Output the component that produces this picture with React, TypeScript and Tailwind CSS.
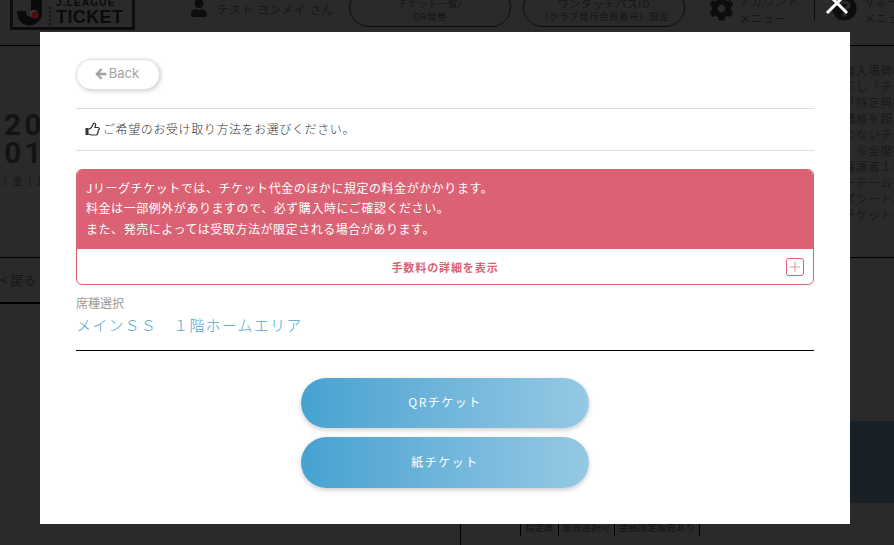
import React from 'react';
import { FaArrowLeft, FaCog, FaQuestionCircle, FaUser } from 'react-icons/fa';

const sans = "font-['Noto_Sans_CJK_JP','Noto_Sans',sans-serif]";

const noticeLines = [
  'Jリーグチケットでは、チケット代金のほかに規定の料金がかかります。',
  '料金は一部例外がありますので、必ず購入時にご確認ください。',
  'また、発売によっては受取方法が限定される場合があります。',
];

const sideLines = [
  'は入場資格',
  '忘し「チケ',
  '「特定興行',
  '価格を超え',
  'のないチケ',
  '　※全席指',
  '保護者１名',
  'ーチームを',
  'ズシート、',
  'チケットを',
];

const tags = ['指定席', '座席選択可', '会員限定販売あり'];

const JLogo = () => (
  <svg width="26" height="27" viewBox="0 0 26 27" className="shrink-0">
    <path d="M14 0h11v14a12.5 12.5 0 0 1-25 0v-2h9v2a4 4 0 0 0 5 3.500z" fill="#0b0b0b" />
    <circle cx="17" cy="15" r="4" fill="#3a3a3a" />
    <circle cx="18" cy="16" r="3.500" fill="#4e0d10" />
  </svg>
);

const ThumbIcon = () => (
  <svg width="15" height="14" viewBox="0 0 15 14" className="shrink-0">
    <rect x="0.500" y="6" width="3" height="7" fill="#333333" />
    <path
      d="M3.500 7.500 6.500 5.500 8.500 1.500C10 .8 11 2 10.500 3.500L10 5.500H13C14.500 5.500 14.800 7.500 13.500 8L12.500 12C12.300 12.800 11.500 13 11 13H6.500L3.500 12"
      fill="none"
      stroke="#333333"
      strokeWidth="1.200"
    />
  </svg>
);

const Background = () => (
  <div className="h-[545px] w-[894px] overflow-hidden bg-[#2a2a2a] text-[#131313]">
    {/* Header */}
    <header className="flex h-[46px] items-start whitespace-nowrap border-b border-black">
      <div className="ml-[10px] mt-[-12px] flex h-[42px] w-[125px] shrink-0 items-end border-[3px] border-[#0d0d0d] pb-[1px] pl-[4px]">
        <JLogo />
        <div className="mb-[1px] ml-[6px] flex flex-col gap-[2px]">
          {[0, 1, 2, 3, 4].map((dot) => (
            <span key={dot} className="h-[2px] w-[2px] rounded-full bg-[#0b0b0b]" />
          ))}
        </div>
        <div className="ml-[5px] font-['Liberation_Sans',sans-serif] font-bold leading-none text-[#0b0b0b]">
          <div className="text-[10px] leading-[11px] tracking-[1.2px]">J.LEAGUE</div>
          <div className="text-[18px] leading-[18px] tracking-[0.4px]">TICKET</div>
        </div>
      </div>
      <FaUser className="ml-[55px] mt-[-1px] shrink-0 text-[#0d0d0d]" size={18} />
      <span className={`${sans} ml-[9px] mt-[1px] w-[116px] shrink-0 text-[11.5px] leading-[16px] tracking-[0.8px] text-[#161616]`}>テスト ヨンメイ さん</span>
      <div className={`${sans} ml-[16px] mt-[-12px] flex h-[39px] w-[162px] shrink-0 flex-col items-center justify-end rounded-[20px] border border-[#0d0d0d] pb-[3px] text-[9.5px] leading-[13px] tracking-[0.5px] text-[#161616]`}>
        <span>チケット一覧/</span>
        <span>QR発券</span>
      </div>
      <div className={`${sans} ml-[12px] mt-[-12px] flex h-[39px] w-[162px] shrink-0 flex-col items-center justify-end rounded-[20px] border border-[#0d0d0d] pb-[3px] leading-[13px] text-[#161616]`}>
        <span className="text-[11px] tracking-[0.5px]">ワンタッチパスID</span>
        <span className="text-[9.5px] tracking-[0.5px]">（クラブ発行会員番号）設定</span>
      </div>
      <FaCog className="ml-[24px] mt-[-4px] shrink-0 text-[#0d0d0d]" size={25} />
      <div className={`${sans} ml-[5px] mt-[-7px] flex w-[60px] shrink-0 flex-col text-[11px] leading-[17px] tracking-[1px] text-[#161616]`}>
        <span>アカウント</span>
        <span>メニュー</span>
      </div>
      <div className="ml-[15px] mt-[-1px] h-[21px] w-px shrink-0 bg-[#0d0d0d]" />
      <FaQuestionCircle className="ml-[17px] mt-[-4px] shrink-0 text-[#0d0d0d]" size={25} />
      <div className={`${sans} ml-[7px] mt-[-7px] flex shrink-0 flex-col text-[11px] leading-[17px] tracking-[1px] text-[#161616]`}>
        <span>サポート</span>
        <span>メニュー</span>
      </div>
    </header>

    {/* Page body */}
    <div className="flex h-[499px]">
      <div className="flex w-[461px] shrink-0 flex-col border-r border-black">
        <div className="h-[212px] shrink-0 border-b border-black pl-[4px] pt-[65px]">
          <div className="font-['Roboto',sans-serif] text-[30px] font-bold leading-[28px] tracking-[3px] text-[#131313]">20</div>
          <div className="font-['Roboto',sans-serif] text-[30px] font-bold leading-[28px] tracking-[3px] text-[#131313]">01</div>
          <div className={`${sans} mt-[7px] whitespace-pre text-[10px] leading-[14px] tracking-[1.5px] text-[#161616]`}>[ 金 ] 1</div>
        </div>
        <div className={`${sans} flex h-[46px] shrink-0 items-center border-b-2 border-black text-[13px] text-[#171717]`}>&lt; 戻る</div>
      </div>
      <div className="flex min-w-0 flex-1 flex-col">
        <div className="flex h-[212px] shrink-0 justify-end border-b border-black">
          <div className={`${sans} w-[50px] shrink-0 overflow-hidden whitespace-nowrap pt-[16px] text-[11.5px] leading-[16px] tracking-[0.6px] text-[#191919]`}>
            {sideLines.map((line) => (
              <div key={line}>{line}</div>
            ))}
          </div>
        </div>
        <div className="mt-[163px] h-[82px] shrink-0 bg-[#192127]" />
        <div className={`${sans} ml-[59px] mt-[17px] flex h-[16px] text-[9.5px] leading-[14px] text-[#131313]`}>
          {tags.map((tag) => (
            <span key={tag} className="border-l border-black px-[4px] last:border-r">{tag}</span>
          ))}
        </div>
      </div>
    </div>
  </div>
);

const Modal = () => (
  <div className={`${sans} flex h-[492px] w-[810px] flex-col bg-white px-[36px] pt-[27px]`}>
    <button className="flex h-[31px] w-[84px] shrink-0 items-center justify-center gap-[2px] rounded-full border border-[#e2e2e2] bg-white text-[#a3a3a3] shadow-[1px_1px_4px_rgba(0,0,0,0.2)]">
      <FaArrowLeft size={12} className="mb-[1px] ml-[-2px] stroke-[30]" />
      <span className="mb-[2px] font-['Inter',sans-serif] text-[13px] leading-none">Back</span>
    </button>

    <div className="mt-[18px] flex h-[43px] shrink-0 items-center gap-[3px] border-y border-[#dddddd] pb-[2px] pl-[9px] text-[12px] font-light tracking-[0.6px] text-[#333333]">
      <ThumbIcon />
      <span>ご希望のお受け取り方法をお選びください。</span>
    </div>

    <div className="mt-[18px] shrink-0 overflow-hidden rounded-[6px] border border-[#db6274]">
      <div className="flex h-[79px] flex-col justify-center bg-[#db6274] pb-[2px] pl-[9px] text-[12px] leading-[20.5px] tracking-[0.55px] text-white">
        {noticeLines.map((line) => (
          <div key={line}>{line}</div>
        ))}
      </div>
      <div className="relative flex h-[35px] items-center justify-center pt-[2px] text-[11px] font-bold tracking-[0.9px] text-[#db6274]">
        <span>手数料の詳細を表示</span>
        <span className="absolute right-[9px] top-[9px] flex h-[18px] w-[18px] items-center justify-center rounded-[3px] border border-[#db6274]">
          <svg width="12" height="12" viewBox="0 0 12 12">
            <path d="M6 1v10M1 6h10" stroke="#e79aa6" strokeWidth="1.2" />
          </svg>
        </span>
      </div>
    </div>

    <div className="mt-[9px] shrink-0 text-[12px] leading-[18px] text-[#9a9a9a]">席種選択</div>
    <div className="mt-[2px] h-[37px] shrink-0 border-b border-black text-[15px] font-light leading-[21px] tracking-[1.2px] text-[#4fa3d3]">メインＳＳ　１階ホームエリア</div>

    <div className="mt-[27px] flex flex-col items-center gap-[9px]">
      <button className="h-[50px] w-[288px] rounded-full bg-gradient-to-r from-[#45a2d1] to-[#95c9e4] pb-[2px] text-[12px] tracking-[1.5px] text-white shadow-[0_2px_5px_rgba(0,0,0,0.2)]">
        QRチケット
      </button>
      <button className="h-[51px] w-[288px] rounded-full bg-gradient-to-r from-[#45a2d1] to-[#95c9e4] pb-[2px] text-[12px] tracking-[1.5px] text-white shadow-[0_2px_5px_rgba(0,0,0,0.2)]">
        紙チケット
      </button>
    </div>
  </div>
);

export default function App() {
  return (
    <div className="relative h-[545px] w-[894px] overflow-hidden">
      <Background />
      {/* Dialog layer */}
      <div className="absolute inset-0 pl-[40px] pt-[32px]">
        <Modal />
        <svg width="24" height="24" viewBox="0 0 24 24" className="absolute left-[825px] top-[-9px]">
          <path d="M2 2l20 20M22 2L2 22" stroke="#ffffff" strokeWidth="3" />
        </svg>
      </div>
    </div>
  );
}
